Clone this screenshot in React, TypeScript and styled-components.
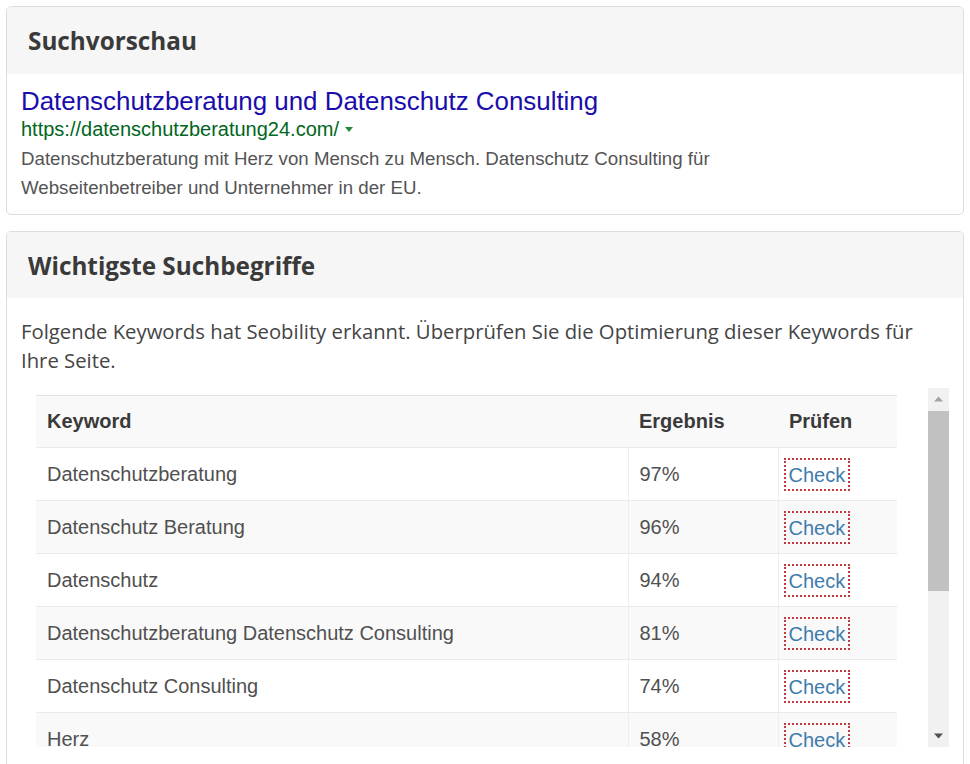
import React from 'react';
import styled, { createGlobalStyle } from 'styled-components';

const GlobalStyle = createGlobalStyle`
  html, body {
    margin: 0;
    padding: 0;
    background: #fff;
  }
  body {
    font-family: "Open Sans", "Liberation Sans", Arial, sans-serif;
    color: #333;
  }
`;

const Page = styled.div`
  padding: 6px 6px 0 6px;
  display: flex;
  flex-direction: column;
  gap: 16px;
`;

const Panel = styled.section`
  border: 1px solid #ddd;
  border-radius: 5px;
  background: #fff;
  overflow: hidden;
`;

const PanelHeading = styled.div<{ $height: number }>`
  height: ${(p) => p.$height}px;
  display: flex;
  align-items: center;
  padding: 0 21px;
  background: #f6f6f6;
  font-family: "Open Sans", sans-serif;
  font-weight: 700;
  font-size: 24.3px;
  color: #3a3a3a;
`;

const PreviewBody = styled.div`
  padding: 12px 14px 12px 14px;
  font-family: "Liberation Sans", Arial, sans-serif;
`;

const SerpTitle = styled.a`
  display: block;
  font-size: 25.9px;
  line-height: 30px;
  color: #1a0dab;
  text-decoration: none;
`;

const SerpUrl = styled.div`
  display: flex;
  align-items: center;
  gap: 6px;
  font-size: 20px;
  line-height: 26px;
  color: #006621;
`;

const Caret = styled.span`
  width: 0;
  height: 0;
  border-left: 4.5px solid transparent;
  border-right: 4.5px solid transparent;
  border-top: 5px solid #1e8a3a;
  margin-top: 1px;
`;

const SerpDescription = styled.p`
  margin: 2px 0 0;
  font-size: 18.7px;
  line-height: 29px;
  color: #545454;
  max-width: 720px;
`;

const KeywordsBody = styled.div`
  padding: 19px 14px 40px 14px;
`;

const Intro = styled.p`
  margin: 0;
  font-family: "Open Sans", sans-serif;
  font-size: 20.3px;
  line-height: 29px;
  color: #444;
  max-width: 910px;
`;

const ScrollArea = styled.div`
  margin: 13px 0 0 15px;
  height: 359px;
  display: flex;
`;

const Viewport = styled.div`
  flex: 1;
  overflow: hidden;
  padding-top: 7px;
  padding-right: 30px;
`;

const Table = styled.table`
  width: 861px;
  border-collapse: collapse;
  font-family: "Liberation Sans", Arial, sans-serif;
  font-size: 20px;
  color: #505050;
  border-top: 1px solid #e2e2e2;
`;

const HeadCell = styled.th<{ $width?: number }>`
  height: 52px;
  padding: 0 11px;
  text-align: left;
  font-weight: 700;
  color: #3a3a3a;
  background: #f9f9f9;
  width: ${(p) => (p.$width ? `${p.$width}px` : 'auto')};
  box-sizing: border-box;
`;

const Row = styled.tr<{ $striped: boolean }>`
  background: ${(p) => (p.$striped ? '#f9f9f9' : '#fff')};
`;

const Cell = styled.td<{ $divider?: boolean }>`
  height: 53px;
  padding: 0 11px;
  border-top: 1px solid #eaeaea;
  border-left: ${(p) => (p.$divider ? '1px solid #eeeeee' : 'none')};
  box-sizing: border-box;
`;

const CheckLink = styled.a`
  display: inline-block;
  padding: 5px 5px 4px 5px;
  color: #3f7cad;
  text-decoration: none;
  outline: 2px dotted #c23a40;
  outline-offset: -2px;
  line-height: 24px;
  margin-left: -6px;
`;

const Scrollbar = styled.div`
  width: 21px;
  display: flex;
  flex-direction: column;
  background: #f1f1f1;
`;

const ScrollButton = styled.div`
  height: 22px;
  display: flex;
  align-items: center;
  justify-content: center;
  background: #f1f1f1;
`;

const Thumb = styled.div`
  height: 180px;
  margin: 1px 0 0;
  background: #c1c1c1;
`;

const Track = styled.div`
  flex: 1;
`;

const keywords = [
  { term: 'Datenschutzberatung', score: 97 },
  { term: 'Datenschutz Beratung', score: 96 },
  { term: 'Datenschutz', score: 94 },
  { term: 'Datenschutzberatung Datenschutz Consulting', score: 81 },
  { term: 'Datenschutz Consulting', score: 74 },
  { term: 'Herz', score: 58 },
  { term: 'Mensch', score: 52 },
  { term: 'Webseitenbetreiber', score: 47 },
  { term: 'Unternehmer', score: 41 },
  { term: 'EU', score: 33 },
];

const Arrow = ({ up, color }: { up?: boolean; color: string }) => (
  <svg width="9" height="6" viewBox="0 0 9 6">
    <path d={up ? 'M0 5.5 L4.5 0.5 L9 5.5 Z' : 'M0 0.5 L4.5 5.5 L9 0.5 Z'} fill={color} />
  </svg>
);

export default function App() {
  return (
    <>
      <GlobalStyle />
      <Page>
        <Panel>
          <PanelHeading $height={67}>Suchvorschau</PanelHeading>
          <PreviewBody>
            <SerpTitle href="#">Datenschutzberatung und Datenschutz Consulting</SerpTitle>
            <SerpUrl>
              https://datenschutzberatung24.com/
              <Caret />
            </SerpUrl>
            <SerpDescription>
              Datenschutzberatung mit Herz von Mensch zu Mensch. Datenschutz Consulting für
              Webseitenbetreiber und Unternehmer in der EU.
            </SerpDescription>
          </PreviewBody>
        </Panel>

        <Panel>
          <PanelHeading $height={66}>Wichtigste Suchbegriffe</PanelHeading>
          <KeywordsBody>
            <Intro>
              Folgende Keywords hat Seobility erkannt. Überprüfen Sie die Optimierung dieser Keywords für
              Ihre Seite.
            </Intro>
            <ScrollArea>
              <Viewport>
                <Table>
                  <thead>
                    <tr>
                      <HeadCell $width={592}>Keyword</HeadCell>
                      <HeadCell $width={150}>Ergebnis</HeadCell>
                      <HeadCell>Prüfen</HeadCell>
                    </tr>
                  </thead>
                  <tbody>
                    {keywords.map((k, i) => (
                      <Row key={k.term} $striped={i % 2 === 1}>
                        <Cell>{k.term}</Cell>
                        <Cell $divider>{k.score}%</Cell>
                        <Cell $divider>
                          <CheckLink href="#">Check</CheckLink>
                        </Cell>
                      </Row>
                    ))}
                  </tbody>
                </Table>
              </Viewport>
              <Scrollbar>
                <ScrollButton>
                  <Arrow up color="#a3a3a3" />
                </ScrollButton>
                <Thumb />
                <Track />
                <ScrollButton>
                  <Arrow color="#505050" />
                </ScrollButton>
              </Scrollbar>
            </ScrollArea>
          </KeywordsBody>
        </Panel>
      </Page>
    </>
  );
}
